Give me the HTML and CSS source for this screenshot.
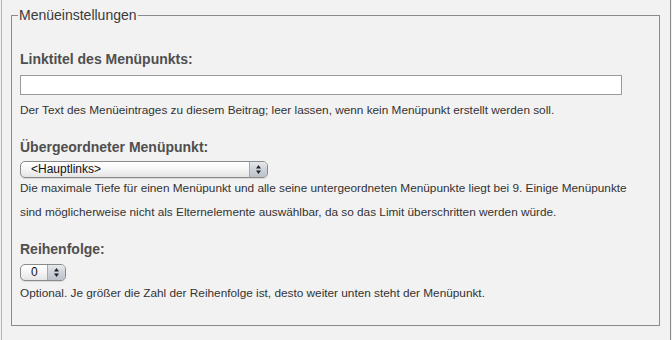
FILE: index.html
```html
<!DOCTYPE html>
<html lang="de">
<head>
<meta charset="utf-8">
<title>Menüeinstellungen</title>
<link rel="stylesheet" href="styles.css">
</head>
<body>
<div class="wrap">
  <fieldset class="box">
    <legend class="legend">Menüeinstellungen</legend>

    <div class="field">
      <label class="label" for="linktitel">Linktitel des Menüpunkts:</label>
      <input class="text-input" id="linktitel" type="text">
      <p class="help help-first">Der Text des Menüeintrages zu diesem Beitrag; leer lassen, wenn kein Menüpunkt erstellt werden soll.</p>
    </div>

    <div class="field">
      <div class="label">Übergeordneter Menüpunkt:</div>
      <div class="select select-wide">
        <span class="select-value">&lt;Hauptlinks&gt;</span>
        <span class="select-arrows">
          <svg width="7" height="11" viewBox="0 0 7 11"><path d="M3.5 1 L6 4.5 L1 4.5 Z M3.5 10 L6 6.5 L1 6.5 Z" fill="#222"/></svg>
        </span>
      </div>
      <p class="help">Die maximale Tiefe für einen Menüpunkt und alle seine untergeordneten Menüpunkte liegt bei 9. Einige Menüpunkte<br>sind möglicherweise nicht als Elternelemente auswählbar, da so das Limit überschritten werden würde.</p>
    </div>

    <div class="field">
      <div class="label">Reihenfolge:</div>
      <div class="select select-small">
        <span class="select-value">0</span>
        <span class="select-arrows">
          <svg width="7" height="11" viewBox="0 0 7 11"><path d="M3.5 1 L6 4.5 L1 4.5 Z M3.5 10 L6 6.5 L1 6.5 Z" fill="#222"/></svg>
        </span>
      </div>
      <p class="help">Optional. Je größer die Zahl der Reihenfolge ist, desto weiter unten steht der Menüpunkt.</p>
    </div>
  </fieldset>
</div>
</body>
</html>
```

FILE: styles.css
```css
html, body {
  margin: 0;
  padding: 0;
  background: #f2f2f2;
}

body {
  font-family: "Liberation Sans", Arial, Helvetica, sans-serif;
  color: #333;
}

.wrap {
  margin: 0 1px;
  height: 340px;
  box-sizing: border-box;
  border-left: 1px solid #b4b4b4;
  border-right: 1px solid #8c8c8c;
  padding: 7px 10px 0 9px;
}

.box {
  margin: 0;
  border: 1px solid #8a8a8a;
  padding: 26px 8px 20px 8px;
}

.legend {
  font-size: 14px;
  line-height: 16px;
  color: #3a3a3a;
  padding: 0 1px;
  margin-left: -2px;
}

.field + .field {
  margin-top: 15px;
}

.label {
  display: block;
  font-size: 14px;
  font-weight: bold;
  line-height: 20px;
  color: #4f4f4f;
  margin-bottom: 6px;
}

.text-input {
  display: block;
  box-sizing: border-box;
  width: 602px;
  height: 20px;
  margin: 0;
  border: 1px solid #9a9a9a;
  background: #fff;
  padding: 0 3px;
  font: 12px "Liberation Sans", Arial, sans-serif;
}

.help {
  margin: 0;
  font-size: 11.8px;
  line-height: 24px;
  color: #333;
}

.help-first {
  margin-top: 3px;
}

.select {
  box-sizing: border-box;
  display: flex;
  align-items: stretch;
  height: 17px;
  border: 1px solid #8a8a8a;
  border-radius: 5px;
  background: linear-gradient(#ffffff, #f6f6f6 45%, #e4e4e4);
  box-shadow: 0 1px 0 rgba(0, 0, 0, 0.1);
  overflow: hidden;
  font-size: 12px;
  color: #111;
}

.select-wide {
  width: 248px;
  margin-top: -2px;
  margin-bottom: -2px;
}

.select-small {
  width: 46px;
  margin-top: -1px;
}

.select-value {
  flex: 1;
  line-height: 15px;
  padding-left: 10px;
  white-space: nowrap;
}

.select-arrows {
  width: 17px;
  display: flex;
  align-items: center;
  justify-content: center;
  border-left: 1px solid #a8a8a8;
  background: linear-gradient(#e6e9ee, #cdd2d8 50%, #bcc2ca);
}
```
